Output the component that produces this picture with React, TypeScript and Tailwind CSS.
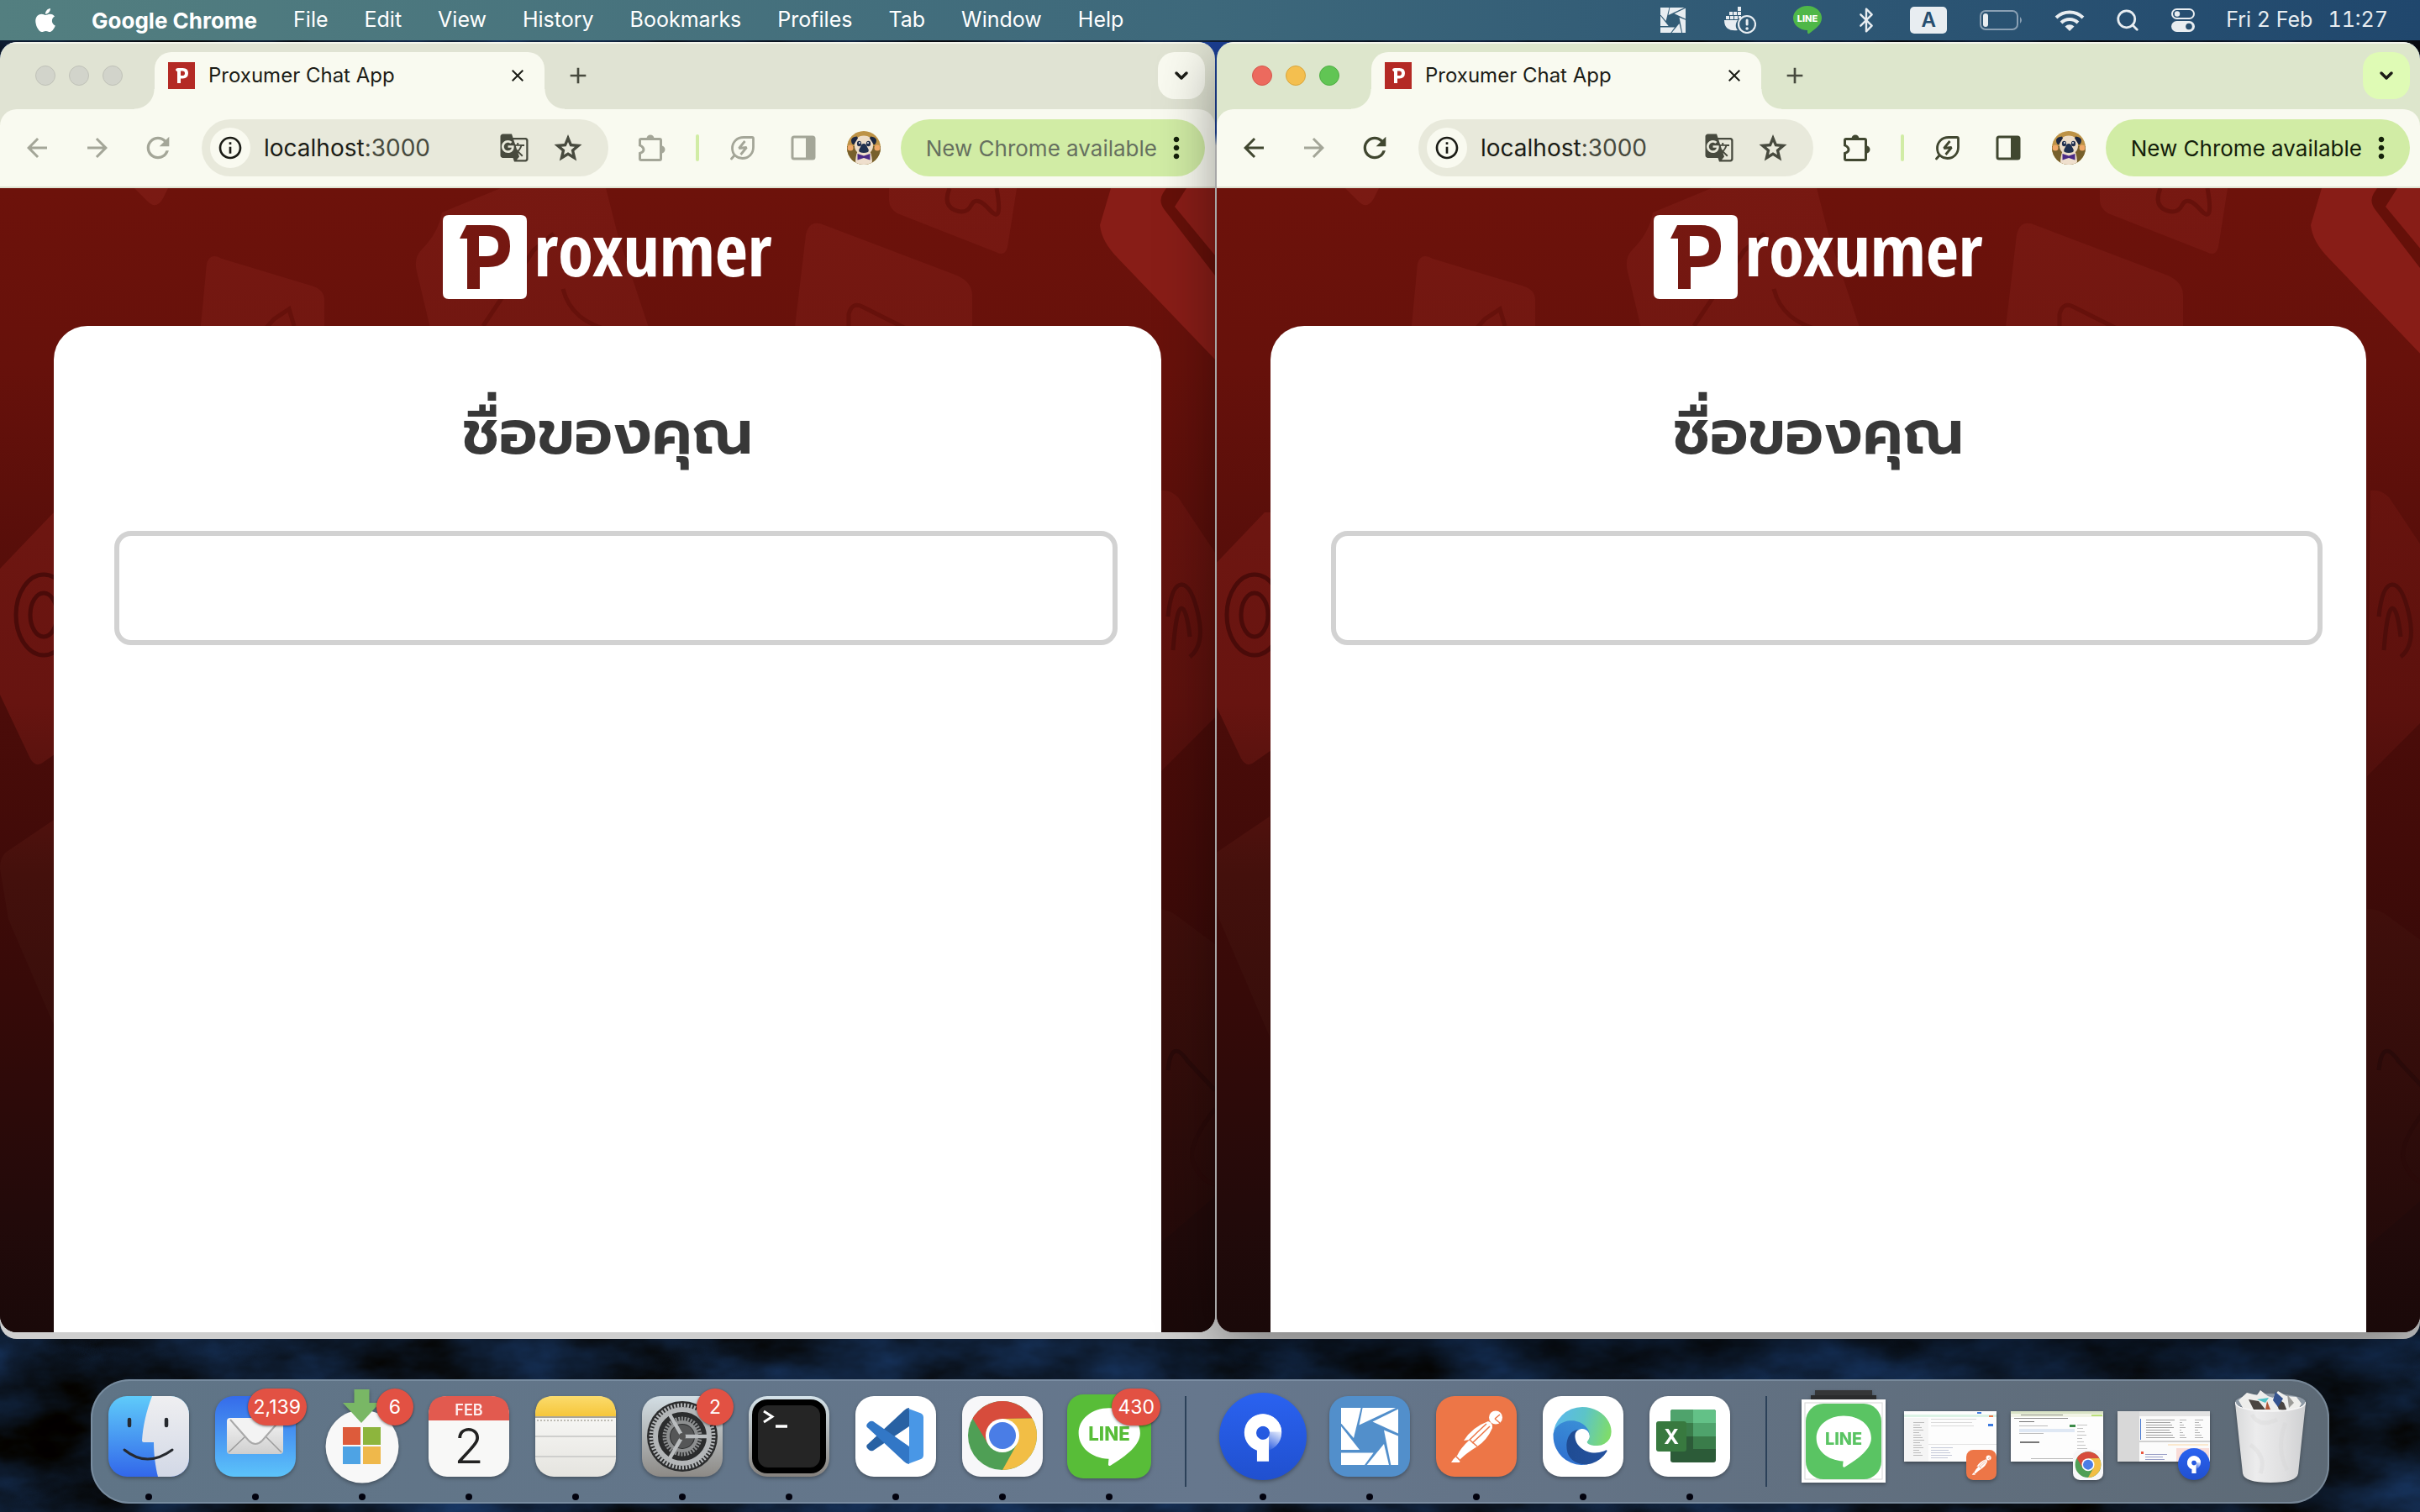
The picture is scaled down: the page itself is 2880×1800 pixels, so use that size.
import type { ReactNode } from "react";
import { FaApple } from "react-icons/fa";
import {
  MdArrowBack,
  MdArrowForward,
  MdRefresh,
  MdInfoOutline,
  MdGTranslate,
  MdMoreVert,
  MdClose,
  MdAdd,
} from "react-icons/md";
import { Bluetooth, ChevronDown, Search } from "lucide-react";

/* ---------- shared artwork ---------- */

function ShutterMark({ className }: { className: string }) {
  return (
    <svg viewBox="0 0 68 68" className={className} fill="currentColor" aria-hidden="true">
      <path d="M0 0H23.7L15 36 0 18.5Z" />
      <path d="M25.6 0H65L21.5 20.5Z" />
      <path d="M68 1.5V30.5L37.5 16.5Z" />
      <path d="M51 26.5L68 33.5V68H59.3Z" />
      <path d="M51 43L57 68H30.6Z" />
      <path d="M0 53.5H38.6L28 68H0Z" />
      <path d="M0 22L22 50H0Z" />
    </svg>
  );
}

function Wallpaper() {
  return (
    <svg className="absolute inset-0 h-full w-full" aria-hidden="true">
      <defs>
        <filter id="sea" x="0" y="0" width="100%" height="100%" colorInterpolationFilters="sRGB">
          <feTurbulence type="fractalNoise" baseFrequency="0.006 0.012" numOctaves="5" seed="11" />
          <feColorMatrix
            type="matrix"
            values="0 0 0.12 0 -0.01  0 0 0.32 0 -0.06  0 0 0.62 0 -0.14  0 0 0 0 1"
          />
        </filter>
      </defs>
      <rect width="100%" height="100%" fill="#0b1420" />
      <rect width="100%" height="100%" filter="url(#sea)" />
    </svg>
  );
}

/* ---------- menu bar ---------- */

const menus = ["File", "Edit", "View", "History", "Bookmarks", "Profiles", "Tab", "Window", "Help"];

function DockerStatus() {
  return (
    <svg viewBox="0 0 38 32" className="h-8 w-[38px]" fill="#e8edf1" aria-hidden="true">
      <path d="M16 0h4v5h-4zM11 6h4v4h-4zM16 6h4v4h-4zM6 6h4v4H6zM2 11h4v4H2zM7 11h4v4H7zM12 11h4v4h-4zM17 11h3v3h-3z" />
      <path d="M0 16h16c-3 4-3 9 0 12-8 1-16-1-16-12z" />
      <circle cx="27" cy="21" r="10" fill="none" stroke="#e8edf1" strokeWidth="2.2" />
      <rect x="25.6" y="14.500" width="3" height="8" rx="1.500" />
      <circle cx="27.1" cy="26" r="1.800" />
    </svg>
  );
}

function LineStatus() {
  return (
    <svg viewBox="0 0 34 34" className="size-[34px]" aria-hidden="true">
      <path d="M17 0a17 14.500 0 0 1 17 14.500c0 8-7 12-15 18.500-1 .6-2-.2-2-2v-2A17 14.500 0 0 1 17 0z" fill="#4fb748" />
      <text x="17" y="18.500" textAnchor="middle" fontFamily="Inter, sans-serif" fontWeight="800" fontSize="11" fill="#fff">
        LINE
      </text>
    </svg>
  );
}

function MenuBar() {
  return (
    <header className="relative z-20 flex h-12 shrink-0 items-center bg-linear-to-r from-[#537f80] via-[#3d687b] to-[#20476d] text-[25px] text-white">
      <nav aria-label="Application menu" className="flex flex-1 items-center gap-[43px] pl-[38px]">
        <button aria-label="Apple menu" className="-mr-1">
          <FaApple className="size-8" />
        </button>
        <button className="text-[26px] font-bold">Google Chrome</button>
        {menus.map((m) => (
          <button key={m}>{m}</button>
        ))}
      </nav>
      <div className="flex items-center pr-[38px] text-[#e8edf1]">
        <button aria-label="PhotoScape" className="flex w-20 justify-center">
          <ShutterMark className="size-[30px]" />
        </button>
        <button aria-label="Docker" className="flex w-20 justify-center">
          <DockerStatus />
        </button>
        <button aria-label="LINE" className="flex w-20 justify-center">
          <LineStatus />
        </button>
        <button aria-label="Bluetooth" className="flex w-[60px] justify-center">
          <Bluetooth className="size-8" strokeWidth={1.8} />
        </button>
        <button
          aria-label="Input source"
          className="mx-[22px] h-8 w-11 rounded-[5px] bg-[#e8edf1] text-2xl leading-8 font-semibold text-[#264e6f]"
        >
          A
        </button>
        <button aria-label="Battery" className="flex w-[86px] justify-center">
          <svg viewBox="0 0 52 24" className="h-6 w-[52px]" aria-hidden="true">
            <rect x="1" y="1" width="44" height="22" rx="6" fill="none" stroke="#8aa0b4" strokeWidth="2" />
            <rect x="4" y="4" width="6" height="16" rx="3" fill="#e8edf1" />
            <path d="M48 8q4 4 0 8z" fill="#8aa0b4" />
          </svg>
        </button>
        <button aria-label="Wi-Fi" className="flex w-[76px] justify-center">
          <svg viewBox="0 0 36 26" className="h-[26px] w-9" fill="none" stroke="#e8edf1" strokeWidth="4" aria-hidden="true">
            <path d="M2 10a23 23 0 0 1 32 0" />
            <path d="M8 16a14.500 14.500 0 0 1 20 0" />
            <path d="M12.500 20.500a8 8 0 0 1 11 0L18 26z" fill="#e8edf1" stroke="none" />
          </svg>
        </button>
        <button aria-label="Spotlight" className="flex w-[62px] justify-center">
          <Search className="size-[30px]" strokeWidth={2.2} />
        </button>
        <button aria-label="Control Centre" className="mr-4 flex w-[70px] justify-center">
          <svg viewBox="0 0 28 28" className="size-7" aria-hidden="true">
            <rect x="1" y="1" width="26" height="11" rx="5.500" fill="none" stroke="#e8edf1" strokeWidth="2" />
            <circle cx="7" cy="6.500" r="3.200" fill="#e8edf1" />
            <rect x="0" y="15" width="28" height="13" rx="6.500" fill="#e8edf1" />
            <circle cx="21" cy="21.500" r="3.800" fill="#264e6f" />
          </svg>
        </button>
        <time className="flex gap-[18px] tabular-nums">
          <span>Fri 2 Feb</span>
          <span>11:27</span>
        </time>
      </div>
    </header>
  );
}

/* ---------- browser chrome ---------- */

function PuzzleIcon() {
  return (
    <svg viewBox="0 0 36 36" className="size-9" fill="none" stroke="currentColor" strokeWidth="3" aria-hidden="true">
      <path d="M5 7.500H27q1.500 0 1.500 1.500V31q0 1.500-1.500 1.500H5q-1.500 0-1.500-1.500V24.500Q8 23 8 20T3.500 15V9q0-1.500 1.500-1.500z" />
      <path d="M11.500 7a4.500 4.500 0 0 1 9 0zM29 15.500a4.500 4.500 0 0 1 0 9z" fill="currentColor" stroke="none" />
    </svg>
  );
}

function StarIcon() {
  return (
    <svg viewBox="0 0 34 34" className="size-[34px]" fill="currentColor" aria-hidden="true">
      <path
        fillRule="evenodd"
        d="M17 1L21.500 12 33.500 13 24.400 20.700 27.200 32.500 17 26.300 6.800 32.500 9.600 20.700.5 13 12.500 12Z M17 10L14.700 15.200 9 15.700 13.300 19.500 12 25.200 17 22.200 22 25.200 20.700 19.500 25 15.700 19.300 15.200Z"
      />
    </svg>
  );
}

function LeafIcon() {
  return (
    <svg viewBox="0 0 30 30" className="size-[30px]" fill="none" stroke="currentColor" strokeWidth="2.800" aria-hidden="true">
      <path d="M27.500 4Q27.500 2.500 26 2.500H16C8 2.500 2.500 8 2.500 15.500S8 27.500 14.500 27.500C22 27.500 27.500 22 27.500 14ZM5.500 23.500L1.500 28" strokeLinecap="round" />
      <path d="M17.500 7L10.500 15.500 19.500 14.500 12.500 23" strokeLinejoin="bevel" />
    </svg>
  );
}

function SidePanelIcon() {
  return (
    <svg viewBox="0 0 30 30" className="size-[30px]" aria-hidden="true">
      <rect x="2" y="2" width="26" height="26" rx="2" fill="none" stroke="currentColor" strokeWidth="3" />
      <path d="M18 2h10v26H18z" fill="currentColor" />
    </svg>
  );
}

function PugAvatar() {
  return (
    <svg viewBox="0 0 40 40" className="size-10 rounded-full" aria-hidden="true">
      <rect width="40" height="40" fill="#bd9246" />
      <path d="M0 18h40v22H0z" fill="#77602c" />
      <circle cx="4" cy="20" r="3.500" fill="#efa766" />
      <circle cx="36" cy="20" r="3.500" fill="#efa766" />
      <path d="M10 40c0-14 3-20 10-20s10 6 10 20z" fill="#efdfcd" />
      <path d="M20 5.500c7 0 11 4 11 12 0 7-5 10-11 10s-11-3-11-10c0-8 4-12 11-12z" fill="#eddcc7" />
      <path d="M12 6.500q-6 .5-7 4 0 5 3 6l5-8zM28 6.500q6 .5 7 4 0 5-3 6l-5-8z" fill="#1c2740" />
      <ellipse cx="14.500" cy="15" rx="2.600" ry="3.200" fill="#22304e" />
      <ellipse cx="25.500" cy="15" rx="2.600" ry="3.200" fill="#22304e" />
      <circle cx="15" cy="14" r="0.900" fill="#fff" />
      <circle cx="25" cy="14" r="0.900" fill="#fff" />
      <path d="M20 15q3 0 4 4 3 4 1 6-5 2-10 0-2-2 1-6 1-4 4-4z" fill="#20304f" />
      <path d="M12.500 27l7.500 2.500 7.500-2.500v7.500L20 32l-7.500 2.500z" fill="#4b2a86" />
    </svg>
  );
}

function Favicon() {
  return (
    <svg viewBox="0 0 32 32" className="size-8 shrink-0" aria-hidden="true">
      <rect width="32" height="32" fill="#b42a25" />
      <path
        d="M9 9.500Q9 7 12 7h5.500q6.500 0 6.500 6t-6.500 6.500H15V25h-4V11.500z M15 10.500v5.500h2q3 0 3-2.800t-3-2.700z"
        fill="#fff"
        fillRule="evenodd"
      />
    </svg>
  );
}

function ToolButton({ label, children }: { label: string; children: ReactNode }) {
  return (
    <button aria-label={label} className="flex size-14 shrink-0 items-center justify-center rounded-full">
      {children}
    </button>
  );
}

function PageBackdrop() {
  return (
    <svg
      viewBox="0 0 1446 1362"
      preserveAspectRatio="xMidYMin slice"
      className="absolute inset-0 h-full w-full"
      aria-hidden="true"
    >
      <defs>
        <linearGradient id="maroon" x1="0" y1="0" x2="0" y2="1">
          <stop offset="0" stopColor="#6d120b" />
          <stop offset="0.15" stopColor="#67110b" />
          <stop offset="0.45" stopColor="#4c0c09" />
          <stop offset="0.7" stopColor="#370a08" />
          <stop offset="0.9" stopColor="#220a0a" />
          <stop offset="1" stopColor="#1a0909" />
        </linearGradient>
        <linearGradient id="tile" gradientUnits="userSpaceOnUse" x1="0" y1="0" x2="0" y2="1362">
          <stop offset="0" stopColor="#7a1a13" />
          <stop offset="0.45" stopColor="#671410" />
          <stop offset="0.6" stopColor="#44100c" />
          <stop offset="0.75" stopColor="#360e0b" />
          <stop offset="1" stopColor="#1d0909" />
        </linearGradient>
      </defs>
      <rect width="1446" height="1362" fill="url(#maroon)" />
      <g fill="url(#tile)">
        <path d="M160 0h40l-6 12q-8 14-18 4z" />
        <path d="M246 90q4-14 18-6l106 32q16 4 16 18v40H238z" opacity="0.8" />
        <path d="M596 0h125l14 55 40 120H514l-18-76q-4-16 6-26 20-20 24-44z" opacity="0.8" />
        <path d="M1058 0h152l-11 70q-3 12-14 6L1068 30q-10-6-10-16z" opacity="0.8" />
        <path d="M945 174l14-118q4-20 22-12l158 60q18 8 18 24v46z" opacity="0.8" />
        <path d="M64 386L0 453v150l36 76q7 12 16 4l20-14V386z" />
        <path d="M70 748L8 790q-8 6-8 20l10 60 60 140z" />
        <path d="M1380 360q12-2 22 8l44 66v196l-70 70z" opacity="0.6" />
        <path d="M1376 858q14 0 24 8l46 34v300l-70 60z" opacity="0.8" />
      </g>
      <path d="M1322 0h124v204L1331 84q-20-20-22-40z" fill="#881d17" />
      <path d="M1384 6q-6 10 2 20l60 78V80l-48-58 14-22h-24z" fill="#651009" />
      <g fill="none" stroke="#66110b" strokeWidth="5">
        <path d="M350 164l-6-20-18 12-16 18M575 164l60-90 24-20M670 120q10 40 60 50M1130 0q-8 20 6 26t20-6 22 6 8-26" />
        <path d="M1010 170v-20q4-16 18-8l60 30" />
        <ellipse cx="52" cy="508" rx="33" ry="48" stroke="#4a0b09" />
        <ellipse cx="52" cy="508" rx="16" ry="26" stroke="#4a0b09" />
        <path d="M1390 510q4-38 16-38t20 36-10 50M1396 550q4-50 10-50t10 34" stroke="#4e0d0a" />
        <path d="M1390 1050q4-40 24-10l32 34M1446 1096q-34 44-26 64t26 26" stroke="#2a0a09" />
      </g>
    </svg>
  );
}

function Logo() {
  return (
    <div className="flex items-center gap-2 text-white">
      <svg viewBox="0 0 100 100" className="size-[100px]" aria-hidden="true">
        <path
          fillRule="evenodd"
          fill="#fff"
          d="M7 0H93Q100 0 100 7V93Q100 100 93 100H7Q0 100 0 93V7Q0 0 7 0Z M28 12L20 28H29V88H44V62H54Q80 62 80 37T56 12Z M43 25H52Q66 25 66 37T52 49H43Z"
        />
      </svg>
      <span className="pb-5 font-['Open_Sans_Condensed','Open_Sans',sans-serif] text-[85px] leading-[80px] font-bold">
        roxumer
      </span>
    </div>
  );
}

function BrowserWindow({ active, id }: { active: boolean; id: string }) {
  const strip = active ? "bg-[#dde6cc]" : "bg-[#e0e3d3]";
  const ink = active ? "text-[#414730]" : "text-[#a4a698]";
  const lights = active
    ? ["bg-[#ec6a5e] border-[#d5574c]", "bg-[#f4bf4f] border-[#d9a63c]", "bg-[#61c554] border-[#4fae43]"]
    : ["bg-[#d2d4cb] border-[#c0c2b8]", "bg-[#d2d4cb] border-[#c0c2b8]", "bg-[#d2d4cb] border-[#c0c2b8]"];
  return (
    <section
      aria-label="Proxumer Chat App window"
      className={
        active
          ? "relative z-10 flex min-w-0 flex-col overflow-hidden rounded-[20px] shadow-[0_20px_70px_rgba(0,0,0,0.4)]"
          : "relative flex min-w-0 flex-col overflow-hidden rounded-[20px]"
      }
    >
      <div className={`flex h-20 shrink-0 items-start border-t-2 border-[#f4f5ec] pt-[10px] pr-3 ${strip}`}>
        <div className="flex h-14 w-[184px] items-center gap-4 pl-[42px]">
          {["Close", "Minimise", "Zoom"].map((n, i) => (
            <button key={n} aria-label={n} className={`size-6 rounded-full border ${lights[i]}`} />
          ))}
        </div>
        <div
          role="tab"
          aria-selected="true"
          className="relative z-10 flex h-[68px] w-[464px] items-start rounded-t-[20px] bg-[#f9faf0] px-4 before:absolute before:bottom-0 before:-left-6 before:size-6 before:bg-[radial-gradient(circle_at_0_0,transparent_23px,#f9faf0_24px)] after:absolute after:-right-6 after:bottom-0 after:size-6 after:bg-[radial-gradient(circle_at_100%_0,transparent_23px,#f9faf0_24px)]"
        >
          <div className="flex h-14 flex-1 items-center gap-4">
            <Favicon />
            <span className="flex-1 text-2xl text-[#1b1c16]">Proxumer Chat App</span>
            <button aria-label="Close tab" className="flex size-8 items-center justify-center text-[#1b1c16]">
              <MdClose className="size-6" stroke="currentColor" />
            </button>
          </div>
        </div>
        <button aria-label="New tab" className="ml-3 flex size-14 items-center justify-center text-[#474a3e]">
          <MdAdd className="size-8" />
        </button>
        <button
          aria-label="Search tabs"
          className={`ml-auto flex size-14 items-center justify-center rounded-[20px] text-[#1b1c16] ${active ? "bg-[#dffbb5]" : "bg-[#f9faf0]"}`}
        >
          <ChevronDown className="size-6" strokeWidth={3.5} />
        </button>
      </div>

      <div className={strip}>
        <div className="flex h-[94px] items-center rounded-t-[20px] border-b-2 border-[#e0e3d3] bg-[#f9faf0] pr-3 pl-4">
          <div className={`flex gap-4 ${ink}`}>
            <ToolButton label="Back">
              <MdArrowBack className="size-9" />
            </ToolButton>
            <span className="text-[#a4a698]">
              <ToolButton label="Forward">
                <MdArrowForward className="size-9" />
              </ToolButton>
            </span>
            <ToolButton label="Reload">
              <MdRefresh className="size-10" />
            </ToolButton>
          </div>
          <div className="mx-6 flex h-[68px] min-w-0 flex-1 items-center rounded-full bg-[#e8e9db] pr-5 pl-[10px] text-[#474a3e]">
            <button
              aria-label="Site information"
              className="flex size-12 shrink-0 items-center justify-center rounded-full bg-[#f9faf0] text-[#1b1c16]"
            >
              <MdInfoOutline className="size-8" />
            </button>
            <div className="ml-4 flex-1 text-[28px]">
              <span className="text-[#1b1c16]">localhost</span>:3000
            </div>
            <div className="flex gap-2">
              <ToolButton label="Translate this page">
                <MdGTranslate className="size-9" />
              </ToolButton>
              <ToolButton label="Bookmark this tab">
                <StarIcon />
              </ToolButton>
            </div>
          </div>
          <div className={`flex items-center ${ink}`}>
            <ToolButton label="Extensions">
              <PuzzleIcon />
            </ToolButton>
            <span className="mx-6 h-8 w-1 rounded-full bg-[#d1eca5]" />
            <div className="flex gap-4">
              <ToolButton label="Energy Saver">
                <LeafIcon />
              </ToolButton>
              <ToolButton label="Side panel">
                <SidePanelIcon />
              </ToolButton>
              <ToolButton label="Profile">
                <PugAvatar />
              </ToolButton>
            </div>
          </div>
          <button
            className={`ml-4 flex h-[68px] shrink-0 items-center rounded-full bg-[#d1eca5] pr-[14px] pl-[30px] text-[26px] ${active ? "text-[#14200a]" : "text-[#66705f]"}`}
          >
            New Chrome available
            <MdMoreVert className="ml-[3px] size-10 text-[#14200a]" />
          </button>
        </div>
      </div>

      <main className="relative flex flex-1 flex-col bg-[#1a0909]">
        <PageBackdrop />
        <div className="relative flex h-[164px] shrink-0 items-center justify-center">
          <Logo />
        </div>
        <form className="relative mx-16 flex flex-1 flex-col rounded-t-[40px] bg-white pt-[74px] pr-[52px] pl-[72px]">
          <label
            htmlFor={id}
            className="block pr-5 text-center font-['Prompt','Noto_Sans_Thai','Noto_Sans',sans-serif] text-[73px] leading-[108px] font-semibold text-[#383838]"
          >
            ชื่อของคุณ
          </label>
          <input
            id={id}
            type="text"
            className="mt-[62px] h-[136px] w-full rounded-[20px] border-6 border-[#d2d2d2] bg-white px-6 text-5xl outline-none"
          />
        </form>
      </main>
    </section>
  );
}

/* ---------- dock icons ---------- */

function FinderIcon() {
  return (
    <svg viewBox="0 0 96 96" className="size-24" aria-hidden="true">
      <defs>
        <linearGradient id="fb" x1="0" y1="0" x2="0" y2="1">
          <stop offset="0" stopColor="#5fcbfa" />
          <stop offset="1" stopColor="#3267ea" />
        </linearGradient>
        <linearGradient id="fw" x1="0" y1="0" x2="0" y2="1">
          <stop offset="0" stopColor="#efeff1" />
          <stop offset="1" stopColor="#d2d8e6" />
        </linearGradient>
        <clipPath id="sq">
          <rect width="96" height="96" rx="22" />
        </clipPath>
      </defs>
      <g clipPath="url(#sq)">
        <rect width="96" height="96" fill="url(#fb)" />
        <path d="M52 0C45 18 41 36 40 53q0 2 2 2h12C54 70 56 84 59 96H96V0Z" fill="url(#fw)" />
      </g>
      <g stroke="#26292f" strokeLinecap="round" fill="none">
        <path d="M25 28v7M69 28v7" strokeWidth="4.500" />
        <path d="M19 64Q46 86 76 64" strokeWidth="3" />
      </g>
    </svg>
  );
}

function MailIcon() {
  return (
    <svg viewBox="0 0 96 96" className="size-24" aria-hidden="true">
      <defs>
        <linearGradient id="mb" x1="0" y1="0" x2="0" y2="1">
          <stop offset="0" stopColor="#356bea" />
          <stop offset="1" stopColor="#5cc3fa" />
        </linearGradient>
        <linearGradient id="me" x1="0" y1="0" x2="0" y2="1">
          <stop offset="0" stopColor="#f4f4f4" />
          <stop offset="1" stopColor="#cfcfcf" />
        </linearGradient>
      </defs>
      <rect width="96" height="96" rx="22" fill="url(#mb)" />
      <rect x="14" y="26" width="67" height="43" rx="4" fill="url(#me)" />
      <path d="M16 67L36 48M79 67L60 48" stroke="#9b9b9b" strokeWidth="1.500" />
      <path d="M18 28L40 53q8 8 16 0L78 28" fill="#f3f3f3" stroke="#a9a9a9" strokeWidth="2" />
    </svg>
  );
}

function MicrosoftUpdateIcon() {
  return (
    <svg viewBox="0 0 96 112" className="h-28 w-24" aria-hidden="true">
      <circle cx="48" cy="68" r="43.500" fill="#f8f8f8" />
      <path d="M25 45h21v21H25z" fill="#dd5b3b" />
      <path d="M49 45h21v21H49z" fill="#8db53d" />
      <path d="M25 68h21v21H25z" fill="#4ea3e4" />
      <path d="M49 68h21v21H49z" fill="#efb84b" />
      <path d="M38.500 0h18v16H69L47 40 25 16h13.500z" fill="#79b765" />
    </svg>
  );
}

function CalendarIcon() {
  return (
    <svg viewBox="0 0 96 96" className="size-24" aria-hidden="true">
      <rect width="96" height="96" rx="22" fill="#f8f8f7" />
      <path d="M0 29V22Q0 0 22 0H74Q96 0 96 22V29Z" fill="#e25a4f" />
      <text x="48" y="23" textAnchor="middle" fontFamily="Inter, sans-serif" fontWeight="600" fontSize="18" fill="#fdeeee">
        FEB
      </text>
      <text x="48" y="80" textAnchor="middle" fontFamily="Inter, sans-serif" fontWeight="300" fontSize="58" fill="#222">
        2
      </text>
    </svg>
  );
}

function NotesIcon() {
  return (
    <svg viewBox="0 0 96 96" className="size-24" aria-hidden="true">
      <defs>
        <linearGradient id="ny" x1="0" y1="0" x2="0" y2="1">
          <stop offset="0" stopColor="#fbdb6c" />
          <stop offset="1" stopColor="#f6c63a" />
        </linearGradient>
        <linearGradient id="nw" x1="0" y1="0" x2="0" y2="1">
          <stop offset="0" stopColor="#fcfcfb" />
          <stop offset="1" stopColor="#e5e4df" />
        </linearGradient>
      </defs>
      <rect width="96" height="96" rx="22" fill="url(#nw)" />
      <path d="M0 24V22Q0 0 22 0H74Q96 0 96 22V24Z" fill="url(#ny)" />
      <path d="M0 25h96" stroke="#a9a69b" strokeWidth="2" />
      <path d="M2 29h92" stroke="#bdbbb3" strokeWidth="2" strokeDasharray="2 2" />
      <path d="M0 48h96M0 72h96" stroke="#cfcfcd" strokeWidth="2" />
    </svg>
  );
}

function SettingsIcon() {
  return (
    <svg viewBox="0 0 96 96" className="size-24" aria-hidden="true">
      <defs>
        <linearGradient id="sg" x1="0" y1="0" x2="0" y2="1">
          <stop offset="0" stopColor="#d3dee4" />
          <stop offset="1" stopColor="#8d8a86" />
        </linearGradient>
      </defs>
      <rect width="96" height="96" rx="22" fill="url(#sg)" />
      <circle cx="48" cy="48" r="42" fill="#2b2c2d" />
      <g fill="none" stroke="#b3b6b8">
        <circle cx="48" cy="48" r="37" strokeWidth="5" strokeDasharray="2.200 1.800" />
        <circle cx="48" cy="48" r="32" strokeWidth="6" />
        <circle cx="48" cy="48" r="21" strokeWidth="5" strokeDasharray="2 1.600" stroke="#8d8f90" />
        <circle cx="48" cy="48" r="17" strokeWidth="4" stroke="#8d8f90" />
      </g>
      <circle cx="48" cy="48" r="14" fill="#555657" />
      <path d="M48 48H78M48 48L33 22M48 48L33 74" stroke="#b9bcbe" strokeWidth="4.500" />
      <circle cx="48" cy="48" r="4" fill="#555" />
    </svg>
  );
}

function TerminalIcon() {
  return (
    <svg viewBox="0 0 96 96" className="size-24" aria-hidden="true">
      <defs>
        <linearGradient id="tg" x1="0" y1="0" x2="0" y2="1">
          <stop offset="0" stopColor="#d5e3ea" />
          <stop offset="1" stopColor="#85817d" />
        </linearGradient>
      </defs>
      <rect width="96" height="96" rx="22" fill="url(#tg)" />
      <rect x="4" y="4" width="88" height="88" rx="18" fill="#000" />
      <rect x="11" y="11" width="74" height="74" rx="12" fill="#252525" />
      <path d="M18 18l10 6.500-10 6.500" fill="none" stroke="#fff" strokeWidth="3" />
      <path d="M32 36h14" stroke="#fff" strokeWidth="3.500" />
    </svg>
  );
}

function VsCodeIcon() {
  return (
    <svg viewBox="0 0 96 96" className="size-24" aria-hidden="true">
      <rect width="96" height="96" rx="22" fill="#fff" />
      <path d="M64 14V36L21 65q-3 1-5-1l-2-2q-2-3 1-5L58 17q3-3 6-3z" fill="#2861a3" />
      <path d="M64 81V60L21 30q-3-1-5 1l-2 2q-2 3 1 5L58 78q3 3 6 3z" fill="#3277c6" />
      <path d="M62 14.500l16 6q3 1.500 3 5v44.500q0 3.500-3 5l-16 6q2-1 2-5V19q0-4-2-4.500z" fill="#4997e6" />
    </svg>
  );
}

function ChromeMark() {
  return (
    <g>
      <circle cx="48" cy="47" r="41" fill="#4f9f55" />
      <path d="M12.500 26.500A41 41 0 0 1 83.500 26.500L48 27 30.700 57Z" fill="#d74c3c" />
      <path d="M83.500 26.500A41 41 0 0 1 48 88L65.300 57 48 27Z" fill="#f2be45" />
      <circle cx="48" cy="47" r="20" fill="#fff" />
      <circle cx="48" cy="47" r="16" fill="#4a7de6" />
    </g>
  );
}

function ChromeIcon({ className = "size-24" }: { className?: string }) {
  return (
    <svg viewBox="0 0 96 96" className={className} aria-hidden="true">
      <rect width="96" height="96" rx="22" fill="#f7f7f9" />
      <ChromeMark />
    </svg>
  );
}

function LineBubble({ green }: { green: string }) {
  return (
    <g>
      <path d="M49.500 16C70 16 86 28 86 45.500 86 60 70 72 51 84q-3 1-2.500-2.500L49 76C28 75 13.500 62 13.500 45.500 13.500 29 29 16 49.500 16Z" fill="#fff" />
      <text x="49.500" y="54" textAnchor="middle" fontFamily="Inter, sans-serif" fontWeight="800" fontSize="22" fill={green}>
        LINE
      </text>
    </g>
  );
}

function LineIcon() {
  return (
    <svg viewBox="0 0 99 99" className="size-[100px]" aria-hidden="true">
      <rect width="99" height="99" rx="19" fill="#58bd38" />
      <LineBubble green="#58bd38" />
    </svg>
  );
}

function SourcetreeIcon({ className = "size-[104px]" }: { className?: string }) {
  return (
    <svg viewBox="0 0 103 103" className={className} aria-hidden="true">
      <defs>
        <linearGradient id="stb" x1="0" y1="0" x2="0" y2="1">
          <stop offset="0" stopColor="#2a62f0" />
          <stop offset="1" stopColor="#2050cf" />
        </linearGradient>
        <linearGradient id="stf" gradientUnits="userSpaceOnUse" x1="72" y1="42" x2="58" y2="68">
          <stop offset="0" stopColor="#fff" />
          <stop offset="1" stopColor="#2a5ce0" />
        </linearGradient>
      </defs>
      <circle cx="51.500" cy="51.500" r="51.500" fill="url(#stb)" />
      <circle cx="51.500" cy="47" r="15" fill="none" stroke="url(#stf)" strokeWidth="14" />
      <path
        d="M73.500 46A22 22 0 1 0 44.500 68V81H58.500V51.500A8 8 0 1 1 59.500 46Z"
        fill="#fff"
      />
    </svg>
  );
}

function PhotoscapeIcon() {
  return (
    <span className="flex size-24 items-center justify-center rounded-[22px] bg-[#528fcb] text-white">
      <ShutterMark className="size-[68px]" />
    </span>
  );
}

function PostmanIcon({ className = "size-24" }: { className?: string }) {
  return (
    <svg viewBox="0 0 96 96" className={className} aria-hidden="true">
      <rect width="96" height="96" rx="22" fill="#ed7647" />
      <circle cx="71" cy="25.500" r="8" fill="#fff" />
      <path d="M70 27l6-5M70 27l6 5" stroke="#ed7647" strokeWidth="1.500" />
      <path d="M62 30q6 2 5 8-6 14-18 22Q36 68 29 75l-1 4H18q3-5 7-8 4-9 15-19l-7 1q10-16 29-23z" fill="#fff" />
      <path d="M60 33Q50 42 40 52l9 8M64 36Q54 46 43 56M24 72l5 5" stroke="#ed7647" strokeWidth="1.500" fill="none" />
    </svg>
  );
}

function EdgeIcon() {
  return (
    <svg viewBox="0 0 96 96" className="size-24" aria-hidden="true">
      <defs>
        <linearGradient id="e1" x1="0" y1="0" x2="1" y2="0">
          <stop offset="0" stopColor="#1f4c93" />
          <stop offset="1" stopColor="#25529f" />
        </linearGradient>
        <linearGradient id="e2" x1="0.600" y1="0" x2="0.300" y2="1">
          <stop offset="0" stopColor="#3a8fd6" />
          <stop offset="1" stopColor="#2f6fd0" />
        </linearGradient>
        <linearGradient id="e3" x1="0" y1="0.300" x2="1" y2="0.500">
          <stop offset="0" stopColor="#5cb8ee" />
          <stop offset="0.500" stopColor="#5cc4c8" />
          <stop offset="1" stopColor="#7fdc6b" />
        </linearGradient>
      </defs>
      <rect width="96" height="96" rx="22" fill="#fff" />
      <g transform="translate(12.500 13) scale(0.270)">
        <path
          fill="url(#e2)"
          d="M105.700 241.400a79.200 79.200 0 0 1-22.700-21.300 80.700 80.700 0 0 1 29.500-120c3.200-1.500 8.500-4.100 15.600-4a32.400 32.400 0 0 1 25.700 13 31.900 31.900 0 0 1 6.300 18.700c0-.2 24.500-79.600-80-79.600-43.900 0-80 41.700-80 78.200a130.200 130.200 0 0 0 12.100 56 128 128 0 0 0 156.400 67 75.500 75.500 0 0 1-62.800-8z"
        />
        <path
          fill="url(#e1)"
          d="M231 190.500c-3.400 1.800-6.900 3.400-10.500 4.700a101.500 101.500 0 0 1-35.900 6.500c-47.300 0-88.500-32.500-88.500-74.300a31.500 31.500 0 0 1 16.400-27.300c-42.800 1.800-53.800 46.400-53.800 72.500 0 74 68.100 81.400 82.800 81.400 7.900 0 19.800-2.300 27-4.600l1.300-.4a128.300 128.300 0 0 0 66.600-52.800 4 4 0 0 0-5.400-5.700z"
        />
        <path
          fill="url(#e3)"
          d="M152.300 148.900c-.8 1-3.300 2.500-3.300 5.700 0 2.600 1.700 5.100 4.700 7.200 14.400 10 41.500 8.700 41.600 8.700a59.600 59.600 0 0 0 30.300-8.300 61.400 61.400 0 0 0 30.400-52.900c.3-22.400-8-37.300-11.300-43.900C223.500 23.900 177.700 0 128 0A128 128 0 0 0 0 126.200c.5-36.500 36.800-66 80-66 3.500 0 23.500.3 42 10a72.600 72.600 0 0 1 30.900 29.300c6.100 10.600 7.200 24.100 7.200 29.500s-2.700 13.300-7.800 19.900z"
        />
      </g>
    </svg>
  );
}

function ExcelIcon() {
  return (
    <svg viewBox="0 0 96 96" className="size-24" aria-hidden="true">
      <rect width="96" height="96" rx="22" fill="#fff" />
      <rect x="25" y="16" width="54" height="63" rx="3" fill="#2c5b38" />
      <path d="M25 19q0-3 3-3h24v16H25z" fill="#4fa36c" />
      <path d="M52 16h24q3 0 3 3v13H52z" fill="#63c187" />
      <path d="M25 32h27v16H25z" fill="#3a7c4a" />
      <path d="M52 32h27v16H52z" fill="#4fa36c" />
      <path d="M52 48h27v15H52z" fill="#3a7c4a" />
      <rect x="8" y="30" width="36" height="36" rx="3" fill="#38793f" />
      <text x="26" y="57" textAnchor="middle" fontFamily="Inter, sans-serif" fontWeight="700" fontSize="24" fill="#fff">
        X
      </text>
    </svg>
  );
}

function LineStack() {
  return (
    <svg viewBox="0 0 100 112" className="h-28 w-[100px]" aria-hidden="true">
      <path d="M16 1h68v7H16z" fill="#353637" />
      <path d="M11 7h78v6H11z" fill="#2b2c2d" />
      <rect x="0" y="12" width="100" height="99" fill="#fff" />
      <rect x="4" y="16" width="92" height="91" fill="none" stroke="#d6d6d6" />
      <rect x="5" y="17" width="90" height="90" rx="21" fill="#5ac463" />
      <g transform="translate(5.500 17) scale(0.900)">
        <LineBubble green="#5ac463" />
      </g>
    </svg>
  );
}

function Rows({ x, y, n, w, step, color }: { x: number; y: number; n: number; w: number; step: number; color: string }) {
  return (
    <g fill={color}>
      {Array.from({ length: n }, (_, i) => (
        <rect key={i} x={x} y={y + i * step} width={w - ((i * 5) % 7)} height="1" />
      ))}
    </g>
  );
}

function PostmanThumb() {
  return (
    <svg viewBox="0 0 110 60" className="h-[60px] w-[110px]" aria-hidden="true">
      <rect width="110" height="60" fill="#fdfdfd" />
      <rect y="4" width="110" height="3" fill="#dcf3e6" />
      <rect y="8" width="29" height="52" fill="#f5f5f5" />
      <rect x="87" y="1" width="5" height="2" fill="#3d7be0" />
      <rect x="101" y="5" width="5" height="2" fill="#ed7647" />
      <rect x="100" y="15" width="6" height="3" fill="#3d7be0" />
      <Rows x={11} y={13} n={14} w={13} step={3} color="#bdbdbd" />
      <Rows x={32} y={9} n={3} w={54} step={4} color="#dadada" />
      <rect x="29" y="39" width="81" height="1" fill="#e3e3e3" />
      <Rows x={32} y={43} n={5} w={26} step={3} color="#c4c9d8" />
    </svg>
  );
}

function ChromeThumb() {
  return (
    <svg viewBox="0 0 110 60" className="h-[60px] w-[110px]" aria-hidden="true">
      <rect width="110" height="60" fill="#fdfdfd" />
      <rect width="110" height="3" fill="#d9e3c6" />
      <rect y="3" width="110" height="4" fill="#f1f4e6" />
      <rect x="96" y="4" width="13" height="2" fill="#b9e07b" />
      <rect x="12" y="4" width="50" height="1" fill="#8b8f80" />
      <rect x="4" y="8" width="64" height="1" fill="#8f8f8f" />
      <rect x="10" y="12" width="18" height="1" fill="#777" />
      <rect x="70" y="16" width="7" height="3" fill="#3b8a48" />
      <rect x="10" y="21" width="66" height="4" fill="#dfe8f4" />
      <Rows x={10} y={17} n={2} w={34} step={9} color="#bdbdbd" />
      <rect x="11" y="36" width="23" height="2" fill="#777" />
      <Rows x={79} y={16} n={9} w={12} step={4} color="#c4c4c4" />
      <rect x="24" y="56" width="50" height="1" fill="#b9b9b9" />
    </svg>
  );
}

function SourcetreeThumb() {
  return (
    <svg viewBox="0 0 110 60" className="h-[60px] w-[110px]" aria-hidden="true">
      <rect width="110" height="60" fill="#fbfbfb" />
      <rect width="110" height="6" fill="#e2e2e2" />
      <rect width="26" height="60" fill="#d8d8d8" />
      <rect x="26" y="35" width="84" height="2" fill="#d0d0d0" />
      <Rows x={34} y={10} n={8} w={34} step={3} color="#a3a3a3" />
      <Rows x={74} y={10} n={8} w={8} step={3} color="#b4b4b4" />
      <Rows x={92} y={10} n={8} w={10} step={3} color="#b4b4b4" />
      <rect x="27" y="9" width="1" height="25" fill="#4a7ad0" />
      <rect x="60" y="39" width="48" height="2" fill="#fbe9cf" />
      <rect x="70" y="44" width="39" height="16" fill="#f9dcd8" />
      <rect x="28" y="48" width="3" height="3" fill="#ea5a43" />
      <Rows x={33} y={51} n={3} w={26} step={3} color="#9aa0c8" />
    </svg>
  );
}

function Minimised({ thumb, badge }: { thumb: ReactNode; badge: ReactNode }) {
  return (
    <span className="relative block py-[22px]">
      <span className="block shadow-sm">{thumb}</span>
      <span className="absolute right-0 bottom-0">{badge}</span>
    </span>
  );
}

function TrashIcon() {
  return (
    <svg viewBox="0 0 84 112" className="h-28 w-[84px]" aria-hidden="true">
      <defs>
        <linearGradient id="tr" x1="0" y1="0" x2="1" y2="0">
          <stop offset="0" stopColor="#d9dadb" />
          <stop offset="0.300" stopColor="#ececed" />
          <stop offset="0.700" stopColor="#dfdfe0" />
          <stop offset="1" stopColor="#cfd0d2" />
        </linearGradient>
      </defs>
      <ellipse cx="42" cy="15" rx="42" ry="10" fill="#8d99a5" />
      <path d="M4 13L14 4l12 3 4-6 9 7 6 2 6-8 10 6 12 1 6 8-6 10H12z" fill="#eeeeec" />
      <path d="M16 12l12 2 8 10H22zM46 8l12 8 4 10-10-2z" fill="#4a4541" />
      <path d="M48 3l9 8-6 10-6-8z" fill="#34538f" />
      <path d="M26 12l14-2-4 6z" fill="#4fc3c8" />
      <path d="M38 14l4 10h-6z" fill="#b0583a" />
      <path d="M62 6l8 10-6 6z" fill="#9b9b98" />
      <path d="M0 16q3 9 42 10 39-1 42-10L75 100q-2 11-33 11T9 100Z" fill="url(#tr)" />
      <path d="M0 15q0 10 42 11 42-1 42-11" fill="none" stroke="#f7f7f8" strokeWidth="1.500" />
      <path d="M20 30q8 16 30 6M18 66q20 14 12 34M60 40q-12 30 2 56" fill="none" stroke="#d3d3d5" strokeWidth="5" opacity="0.300" />
    </svg>
  );
}

/* ---------- dock ---------- */

function DockItem({
  label,
  badge,
  running = true,
  children,
}: {
  label: string;
  badge?: string;
  running?: boolean;
  children: ReactNode;
}) {
  return (
    <li className="relative flex h-[148px] w-[127px] flex-col items-center">
      <button aria-label={label} className="flex h-[136px] items-center justify-center">
        <span className="drop-shadow-[0_2px_2px_rgba(0,0,0,0.3)]">{children}</span>
      </button>
      {running && <span className="size-2 rounded-full bg-[#02020e]" />}
      {badge && (
        <span className="absolute top-[11px] right-[2px] flex h-11 min-w-11 items-center justify-center rounded-full bg-[#e25143] px-[7px] text-[23px] text-white shadow-[0_1px_3px_rgba(0,0,0,0.5)]">
          {badge}
        </span>
      )}
    </li>
  );
}

function DockDivider() {
  return (
    <li aria-hidden="true" className="flex h-[148px] w-14 items-center justify-center">
      <span className="h-[108px] w-0.5 bg-[#2c4159]" />
    </li>
  );
}

function Dock() {
  return (
    <footer className="relative z-10 flex shrink-0 justify-center pt-12 pb-[10px]">
      <ul className="flex rounded-[46px] bg-linear-to-r from-[#5f7486] via-[#66778d] to-[#5d6a76] pr-[7px] pl-[5px] shadow-[inset_0_0_0_2px_rgba(150,170,190,0.45)]">
        <DockItem label="Finder"><FinderIcon /></DockItem>
        <DockItem label="Mail" badge="2,139"><MailIcon /></DockItem>
        <DockItem label="Microsoft AutoUpdate" badge="6"><MicrosoftUpdateIcon /></DockItem>
        <DockItem label="Calendar"><CalendarIcon /></DockItem>
        <DockItem label="Notes"><NotesIcon /></DockItem>
        <DockItem label="System Settings" badge="2"><SettingsIcon /></DockItem>
        <DockItem label="Terminal"><TerminalIcon /></DockItem>
        <DockItem label="Visual Studio Code"><VsCodeIcon /></DockItem>
        <DockItem label="Google Chrome"><ChromeIcon /></DockItem>
        <DockItem label="LINE" badge="430"><LineIcon /></DockItem>
        <DockDivider />
        <DockItem label="Sourcetree"><SourcetreeIcon /></DockItem>
        <DockItem label="PhotoScape X"><PhotoscapeIcon /></DockItem>
        <DockItem label="Postman"><PostmanIcon /></DockItem>
        <DockItem label="Microsoft Edge"><EdgeIcon /></DockItem>
        <DockItem label="Microsoft Excel"><ExcelIcon /></DockItem>
        <DockDivider />
        <DockItem label="LINE windows" running={false}><LineStack /></DockItem>
        <DockItem label="Postman window" running={false}>
          <Minimised thumb={<PostmanThumb />} badge={<PostmanIcon className="size-9" />} />
        </DockItem>
        <DockItem label="Chrome window" running={false}>
          <Minimised thumb={<ChromeThumb />} badge={<ChromeIcon className="size-9" />} />
        </DockItem>
        <DockItem label="Sourcetree window" running={false}>
          <Minimised thumb={<SourcetreeThumb />} badge={<SourcetreeIcon className="size-[38px]" />} />
        </DockItem>
        <DockItem label="Bin" running={false}><TrashIcon /></DockItem>
      </ul>
    </footer>
  );
}

export default function App() {
  return (
    <div className="relative flex h-screen flex-col overflow-hidden font-['Inter',sans-serif]">
      <Wallpaper />
      <MenuBar />
      <div className="relative flex min-h-0 flex-1 flex-col pt-0.5">
        <div className="grid min-h-0 flex-1 grid-cols-[1446fr_1432fr] gap-0.5 rounded-[20px] bg-linear-to-b from-[#1b3f94] from-7% to-[#cfcfcf] to-8% pb-2">
          <BrowserWindow active={false} id="name-left" />
          <BrowserWindow active id="name-right" />
        </div>
      </div>
      <Dock />
    </div>
  );
}
